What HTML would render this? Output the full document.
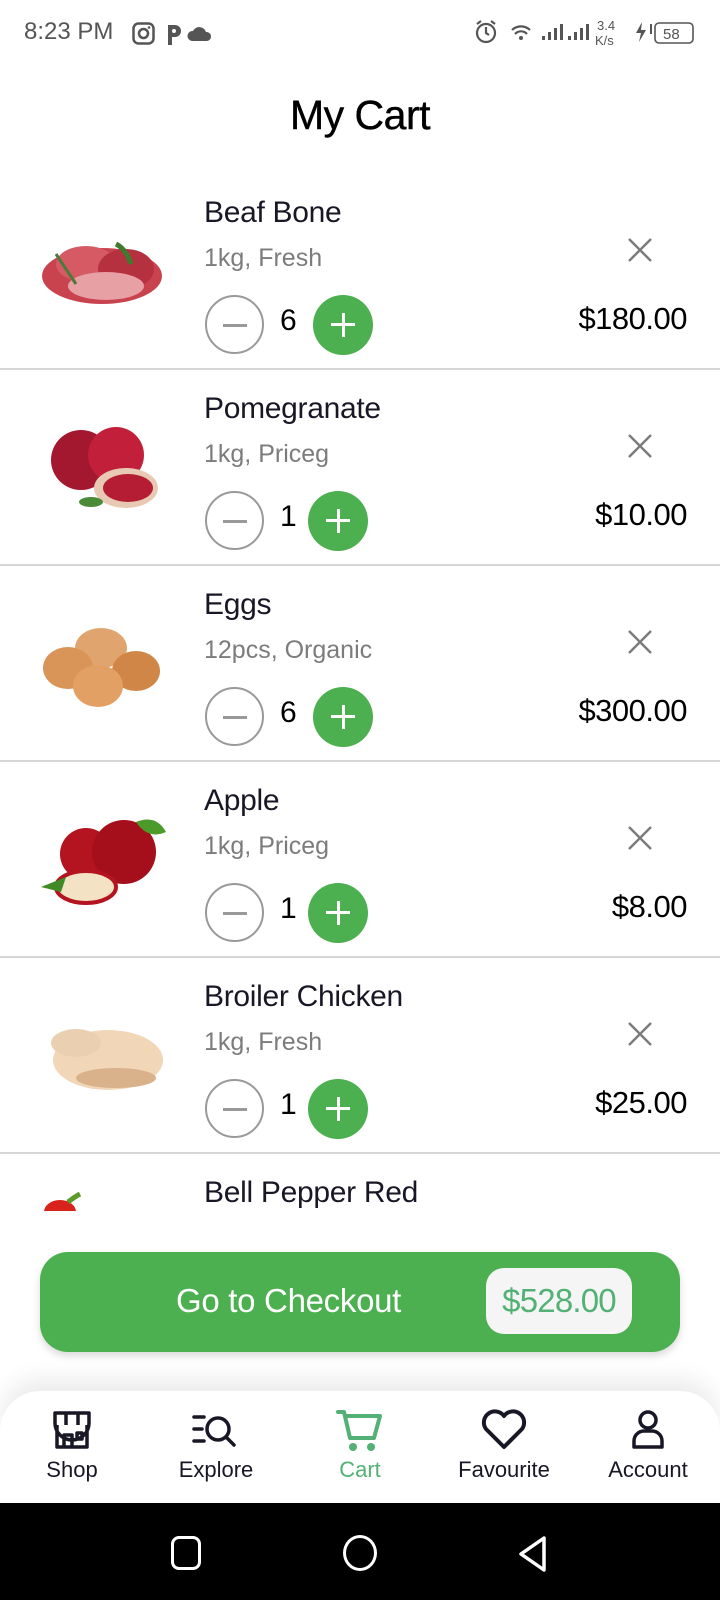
<!DOCTYPE html>
<html><head><meta charset="utf-8"><style>
*{margin:0;padding:0;box-sizing:border-box}
body{width:720px;height:1600px;background:#fff;font-family:"Liberation Sans",sans-serif;position:relative;overflow:hidden;color:#181725}
.abs{position:absolute}
.sb{top:18px;font-size:24px;color:#555}
h1{position:absolute;top:92px;width:100%;text-align:center;font-size:41px;font-weight:normal;color:#000;letter-spacing:-0.5px;-webkit-text-stroke:0.4px #000}
.row{position:absolute;left:0;width:720px;height:196px;border-bottom:2px solid #d6d6d6}
.name{position:absolute;left:204px;top:22px;font-size:30px;color:#181725;letter-spacing:-0.3px}
.sub{position:absolute;left:204px;top:70px;font-size:25px;color:#7c7c7c}
.minus{position:absolute;left:205px;top:121px;width:59px;height:59px;border:2px solid #999;border-radius:50%}
.minus:after{content:"";position:absolute;left:16px;top:27px;width:24px;height:3px;background:#999}
.cnt{position:absolute;top:130px;font-size:30px;color:#000}
.plus{position:absolute;top:121px;width:60px;height:60px;background:#4caf50;border-radius:50%}
.plus:before{content:"";position:absolute;left:18px;top:28px;width:24px;height:3px;background:#fff}
.plus:after{content:"";position:absolute;left:28.5px;top:18px;width:3px;height:24px;background:#fff}
.x{position:absolute;left:626px;top:62px;width:28px;height:28px}
.price{position:absolute;right:33px;top:127px;font-size:31px;color:#000;letter-spacing:-0.5px}
.img{position:absolute;left:36px;top:40px;width:134px;height:110px}
.nav{position:absolute;left:0;top:1391px;width:720px;height:114px;background:#fff;border-radius:40px 40px 0 0;box-shadow:0 -12px 24px rgba(0,0,0,0.08)}
.ni{position:absolute;top:0;width:144px;text-align:center}
.ni svg{position:absolute;top:18px;left:50%;transform:translateX(-50%)}
.ni span{position:absolute;top:66px;left:0;width:100%;font-size:22px;color:#181725}
</style></head><body>
<div class="abs sb" style="left:24px">8:23 PM</div>
<svg class="abs" style="left:132px;top:21px" width="90" height="26" viewBox="0 0 90 26">
<rect x="1.5" y="2.5" width="20" height="20" rx="5" fill="none" stroke="#555" stroke-width="2.5"/><circle cx="11.5" cy="12.5" r="4.5" fill="none" stroke="#555" stroke-width="2.5"/><circle cx="17" cy="6.5" r="1.3" fill="#555"/>
<path d="M36 24V4h7a6 6 0 0 1 0 12h-3v8z" fill="#555"/><circle cx="42" cy="10" r="2" fill="#fff"/>
<path d="M60 20a5 5 0 0 1 1-10 7 7 0 0 1 13 1 4.5 4.5 0 0 1 1 9z" fill="#555"/>
</svg>
<svg class="abs" style="left:472px;top:16px" width="230" height="34" viewBox="0 0 230 34">
<circle cx="14" cy="17" r="9" fill="none" stroke="#555" stroke-width="2.2"/><path d="M14 11v6l3 2M5 8l4-3M23 8l-4-3" stroke="#555" stroke-width="2.2" fill="none"/>
<path d="M40 14a13 13 0 0 1 18 0M43 18a8 8 0 0 1 12 0" stroke="#555" stroke-width="2.2" fill="none"/><circle cx="49" cy="22" r="2" fill="#555"/>
<path d="M70 24h3v-4h-3zM76 24h3v-8h-3zM82 24h3v-12h-3zM88 24h3v-16h-3zM96 24h3v-4h-3zM102 24h3v-8h-3zM108 24h3v-12h-3zM114 24h3v-16h-3z" fill="#555"/>
<text x="125" y="14" font-size="13" fill="#555" font-family="Liberation Sans">3.4</text><text x="123" y="29" font-size="13" fill="#555" font-family="Liberation Sans">K/s</text>
<path d="M170 6l-6 11h5l-2 9 7-12h-5z" fill="#555"/>
<rect x="178" y="8" width="2" height="10" fill="#555"/>
<rect x="183" y="7" width="38" height="20" rx="4" fill="none" stroke="#555" stroke-width="1.6"/>
<text x="191" y="23" font-size="15" fill="#555" font-family="Liberation Sans">58</text>
</svg>
<h1>My Cart</h1>

<div class="row" style="top:174px">
<svg class="img" viewBox="0 0 134 110"><ellipse cx="66" cy="62" rx="60" ry="28" fill="#c9434f"/><ellipse cx="50" cy="50" rx="30" ry="18" fill="#d55a63"/><ellipse cx="90" cy="55" rx="28" ry="20" fill="#b63140"/><ellipse cx="70" cy="72" rx="38" ry="14" fill="#e7a0a4"/><path d="M80 30q10 5 15 20" stroke="#3f7a2e" stroke-width="5" fill="none"/><path d="M20 40l20 30" stroke="#4d7a3a" stroke-width="3"/></svg>
<div class="name">Beaf Bone</div><div class="sub">1kg, Fresh</div>
<div class="minus"></div><div class="cnt" style="left:280px">6</div><div class="plus" style="left:313px"></div>
<svg class="x" viewBox="0 0 28 28"><path d="M3 3l22 22M25 3L3 25" stroke="#7c7c7c" stroke-width="2.5"/></svg>
<div class="price">$180.00</div>
</div>
<div class="row" style="top:370px">
<svg class="img" viewBox="0 0 134 110"><circle cx="45" cy="50" r="30" fill="#a3172f"/><circle cx="80" cy="45" r="28" fill="#c21f3a"/><ellipse cx="90" cy="78" rx="32" ry="20" fill="#e8c9b4"/><ellipse cx="92" cy="78" rx="25" ry="14" fill="#b51d35"/><ellipse cx="55" cy="92" rx="12" ry="5" fill="#4b8a36"/></svg>
<div class="name">Pomegranate</div><div class="sub">1kg, Priceg</div>
<div class="minus"></div><div class="cnt" style="left:280px">1</div><div class="plus" style="left:308px"></div>
<svg class="x" viewBox="0 0 28 28"><path d="M3 3l22 22M25 3L3 25" stroke="#7c7c7c" stroke-width="2.5"/></svg>
<div class="price">$10.00</div>
</div>
<div class="row" style="top:566px">
<svg class="img" viewBox="0 0 134 110"><ellipse cx="65" cy="42" rx="26" ry="20" fill="#e0a56e"/><ellipse cx="32" cy="62" rx="25" ry="21" fill="#d99458"/><ellipse cx="100" cy="65" rx="24" ry="20" fill="#cf8647"/><ellipse cx="62" cy="80" rx="25" ry="21" fill="#e2a064"/></svg>
<div class="name">Eggs</div><div class="sub">12pcs, Organic</div>
<div class="minus"></div><div class="cnt" style="left:280px">6</div><div class="plus" style="left:313px"></div>
<svg class="x" viewBox="0 0 28 28"><path d="M3 3l22 22M25 3L3 25" stroke="#7c7c7c" stroke-width="2.5"/></svg>
<div class="price">$300.00</div>
</div>
<div class="row" style="top:762px">
<svg class="img" viewBox="0 0 134 110"><circle cx="50" cy="52" r="26" fill="#b3141f"/><circle cx="88" cy="50" r="32" fill="#a50f1b"/><path d="M100 20q20-8 30 10q-18 8-30-10z" fill="#4c9a2a"/><ellipse cx="50" cy="85" rx="30" ry="16" fill="#f3e3c4" stroke="#b3141f" stroke-width="4"/><path d="M5 85l25-10l-5 15z" fill="#3f8a24"/></svg>
<div class="name">Apple</div><div class="sub">1kg, Priceg</div>
<div class="minus"></div><div class="cnt" style="left:280px">1</div><div class="plus" style="left:308px"></div>
<svg class="x" viewBox="0 0 28 28"><path d="M3 3l22 22M25 3L3 25" stroke="#7c7c7c" stroke-width="2.5"/></svg>
<div class="price">$8.00</div>
</div>
<div class="row" style="top:958px">
<svg class="img" viewBox="0 0 134 110"><ellipse cx="72" cy="62" rx="55" ry="30" fill="#f1d6b8"/><ellipse cx="40" cy="45" rx="25" ry="14" fill="#ead0b0"/><ellipse cx="80" cy="80" rx="40" ry="10" fill="#d9b28c"/></svg>
<div class="name">Broiler Chicken</div><div class="sub">1kg, Fresh</div>
<div class="minus"></div><div class="cnt" style="left:280px">1</div><div class="plus" style="left:308px"></div>
<svg class="x" viewBox="0 0 28 28"><path d="M3 3l22 22M25 3L3 25" stroke="#7c7c7c" stroke-width="2.5"/></svg>
<div class="price">$25.00</div>
</div>
<div class="abs" style="left:0;top:1154px;width:720px;height:57px;overflow:hidden">
<svg class="abs" style="left:40px;top:36px" width="60" height="30"><ellipse cx="20" cy="22" rx="16" ry="12" fill="#d8231c"/><path d="M28 12q8-6 12-8" stroke="#5c9a2a" stroke-width="5" fill="none"/></svg>
<div class="abs" style="left:204px;top:22px;font-size:30px;letter-spacing:-0.3px">Bell Pepper Red</div>
</div>

<div class="abs" style="left:40px;top:1252px;width:640px;height:100px;background:#4caf50;border-radius:28px;box-shadow:0 4px 8px rgba(0,0,0,0.15)">
<div class="abs" style="left:0;width:497px;top:30px;text-align:center;font-size:33px;color:#fff;letter-spacing:-0.3px">Go to Checkout</div>
<div class="abs" style="left:446px;top:16px;width:146px;height:66px;background:#f5f5f5;border-radius:18px;text-align:center;font-size:33px;line-height:66px;color:#53b175;letter-spacing:-0.8px">$528.00</div>
</div>

<div class="nav">
<div class="ni" style="left:0"><svg width="40" height="42" viewBox="0 0 40 42"><path d="M5 16v22h30V16M3 4h34v10a5 5 0 0 1-34 0zM14 4v12M26 4v12M12 38V26h8v12M25 24h5v6h-5z" fill="none" stroke="#181725" stroke-width="3.5" stroke-linejoin="round"/></svg><span>Shop</span></div>
<div class="ni" style="left:144px"><svg width="48" height="42" viewBox="0 0 48 42"><path d="M2 8h10M2 20h8M2 32h10" stroke="#181725" stroke-width="3.5" stroke-linecap="round"/><circle cx="26" cy="20" r="11" fill="none" stroke="#181725" stroke-width="3.5"/><path d="M34 28l8 8" stroke="#181725" stroke-width="3.5" stroke-linecap="round"/></svg><span>Explore</span></div>
<div class="ni" style="left:288px"><svg width="50" height="42" viewBox="0 0 50 42"><path d="M3 3h6l6 26h24l6-22H12" fill="none" stroke="#53b175" stroke-width="4" stroke-linejoin="round" stroke-linecap="round"/><circle cx="18" cy="38" r="4" fill="#53b175"/><circle cx="36" cy="38" r="4" fill="#53b175"/></svg><span style="color:#53b175">Cart</span></div>
<div class="ni" style="left:432px"><svg width="48" height="42" viewBox="0 0 48 42"><path d="M24 38L6 20A10 10 0 0 1 24 7A10 10 0 0 1 42 20z" fill="none" stroke="#181725" stroke-width="4" stroke-linejoin="round"/></svg><span>Favourite</span></div>
<div class="ni" style="left:576px"><svg width="36" height="42" viewBox="0 0 36 42"><circle cx="18" cy="11" r="8" fill="none" stroke="#181725" stroke-width="3.5"/><path d="M4 38v-6a10 10 0 0 1 10-10h8a10 10 0 0 1 10 10v6z" fill="none" stroke="#181725" stroke-width="3.5" stroke-linejoin="round"/></svg><span>Account</span></div>
</div>

<div class="abs" style="left:0;top:1503px;width:720px;height:97px;background:#000">
<div class="abs" style="left:171px;top:33px;width:30px;height:34px;border:3.5px solid #fff;border-radius:8px"></div>
<div class="abs" style="left:343px;top:32px;width:34px;height:36px;border:3.5px solid #fff;border-radius:50%"></div>
<svg class="abs" style="left:516px;top:32px" width="34" height="38"><path d="M28 3L5 19l23 16z" fill="none" stroke="#fff" stroke-width="3.5" stroke-linejoin="round"/></svg>
</div>
</body></html>
